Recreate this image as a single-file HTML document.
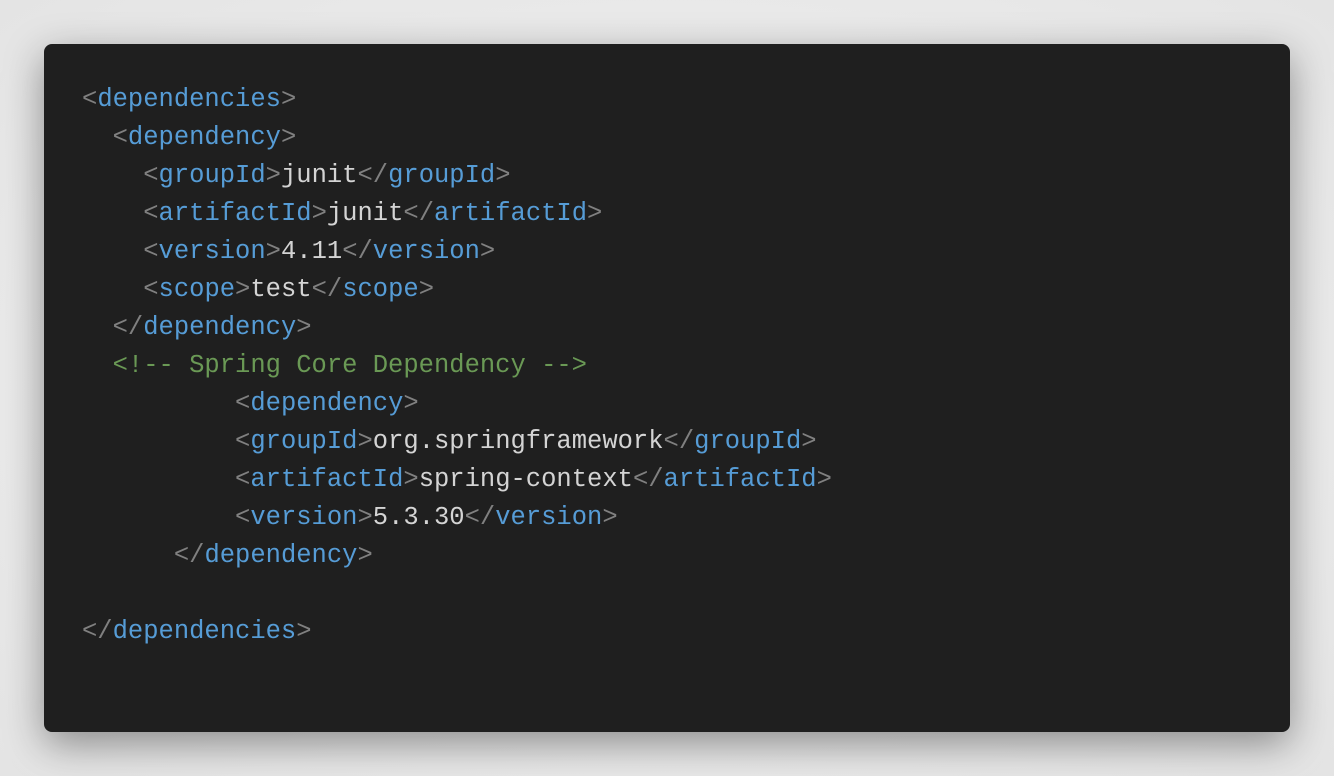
<!DOCTYPE html>
<html><head><style>
html,body{margin:0;padding:0;width:1334px;height:776px;overflow:hidden;background:radial-gradient(ellipse at center,#f4f4f4 0%,#e4e4e4 100%);}
.card{position:absolute;left:44px;top:44px;width:1246px;height:688px;background:#1f1f1f;border-radius:8px;box-shadow:0 12px 40px rgba(0,0,0,0.4);}
pre{position:absolute;left:38px;top:37px;margin:0;font-family:"Liberation Mono",monospace;font-size:25.5px;line-height:38px;color:#d4d4d4;}
.b{color:#808080}.t{color:#569cd6}.c{color:#6a9955}
</style></head><body>
<div class="card"><pre><span class="b">&lt;</span><span class="t">dependencies</span><span class="b">&gt;</span>
  <span class="b">&lt;</span><span class="t">dependency</span><span class="b">&gt;</span>
    <span class="b">&lt;</span><span class="t">groupId</span><span class="b">&gt;</span>junit<span class="b">&lt;/</span><span class="t">groupId</span><span class="b">&gt;</span>
    <span class="b">&lt;</span><span class="t">artifactId</span><span class="b">&gt;</span>junit<span class="b">&lt;/</span><span class="t">artifactId</span><span class="b">&gt;</span>
    <span class="b">&lt;</span><span class="t">version</span><span class="b">&gt;</span>4.11<span class="b">&lt;/</span><span class="t">version</span><span class="b">&gt;</span>
    <span class="b">&lt;</span><span class="t">scope</span><span class="b">&gt;</span>test<span class="b">&lt;/</span><span class="t">scope</span><span class="b">&gt;</span>
  <span class="b">&lt;/</span><span class="t">dependency</span><span class="b">&gt;</span>
  <span class="c">&lt;!-- Spring Core Dependency --&gt;</span>
          <span class="b">&lt;</span><span class="t">dependency</span><span class="b">&gt;</span>
          <span class="b">&lt;</span><span class="t">groupId</span><span class="b">&gt;</span>org.springframework<span class="b">&lt;/</span><span class="t">groupId</span><span class="b">&gt;</span>
          <span class="b">&lt;</span><span class="t">artifactId</span><span class="b">&gt;</span>spring-context<span class="b">&lt;/</span><span class="t">artifactId</span><span class="b">&gt;</span>
          <span class="b">&lt;</span><span class="t">version</span><span class="b">&gt;</span>5.3.30<span class="b">&lt;/</span><span class="t">version</span><span class="b">&gt;</span>
      <span class="b">&lt;/</span><span class="t">dependency</span><span class="b">&gt;</span>

<span class="b">&lt;/</span><span class="t">dependencies</span><span class="b">&gt;</span></pre></div>
</body></html>
